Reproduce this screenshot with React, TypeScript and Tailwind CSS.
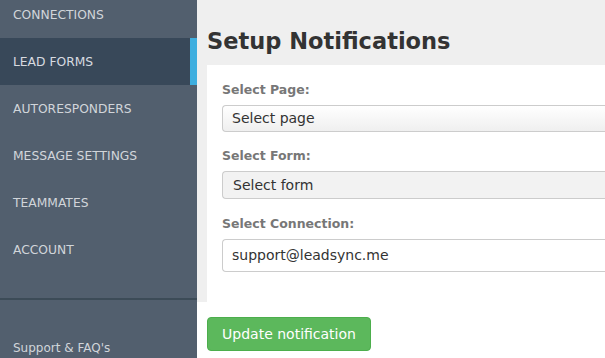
import React from "react";

const items = ["CONNECTIONS", "LEAD FORMS", "AUTORESPONDERS", "MESSAGE SETTINGS", "TEAMMATES", "ACCOUNT"];

export default function App() {
  const font = { fontFamily: '"DejaVu Sans", "Open Sans", sans-serif' };
  return (
    <div className="flex w-[605px] h-[358px] overflow-hidden bg-white" style={font}>
      <aside className="w-[197px] shrink-0 h-full bg-[#525f6e] flex flex-col">
        <ul className="mt-[-9px]">
          {items.map((it) => {
            const active = it === "LEAD FORMS";
            return (
              <li
                key={it}
                className={
                  active
                    ? "h-[47px] flex items-center pt-[2px] pl-[13px] text-[12.3px] text-[#d7dbe0] bg-[#384859] border-r-[7px] border-[#3eaedf]"
                    : "h-[47px] flex items-center pt-[2px] pl-[13px] text-[12.3px] text-[#d1d5da]"
                }
              >
                {it}
              </li>
            );
          })}
        </ul>
        <div className="mt-[25px] h-[2px] bg-[#3c4b57]" />
        <div className="flex-1 flex items-end pb-[1px] pl-[13px] text-[12px] text-[#d1d5da]">Support &amp; FAQ's</div>
      </aside>
      <main className="flex-1 flex flex-col">
        <div className="bg-[#efefef] pl-[10px] h-[302px] flex flex-col">
          <h1 className="h-[65px] pt-[26px] text-[22.5px] font-bold text-[#333333] leading-[30px]">Setup Notifications</h1>
          <div className="flex-1 bg-white pl-[15px] pt-[16px]">
            <label className="block text-[12.5px] font-bold text-[#777777] leading-[18px]">Select Page:</label>
            <div className="mt-[6px] h-[27px] flex items-center pl-[9px] text-[14px] text-[#333333] border border-[#cccccc] border-r-0 rounded-l-[4px] bg-gradient-to-b from-white to-[#efefef]">
              Select page
            </div>
            <label className="block mt-[15px] text-[12.5px] font-bold text-[#777777] leading-[18px]">Select Form:</label>
            <div className="mt-[6px] h-[28px] flex items-center pl-[10px] text-[14px] text-[#333333] border border-[#cccccc] border-r-0 rounded-l-[4px] bg-[#f2f2f2]">
              Select form
            </div>
            <label className="block mt-[16px] text-[12.5px] font-bold text-[#777777] leading-[18px]">Select Connection:</label>
            <div className="mt-[6px] h-[33px] flex items-center pl-[9px] text-[14px] text-[#333333] border border-[#cccccc] border-r-0 rounded-l-[4px] bg-white">
              support@leadsync.me
            </div>
          </div>
        </div>
        <div className="pl-[10px] pt-[15px]">
          <button className="w-[164px] h-[34px] rounded-[4px] bg-[#5cb85c] border border-[#4cae4c] text-white text-[14px]">
            Update notification
          </button>
        </div>
      </main>
    </div>
  );
}
